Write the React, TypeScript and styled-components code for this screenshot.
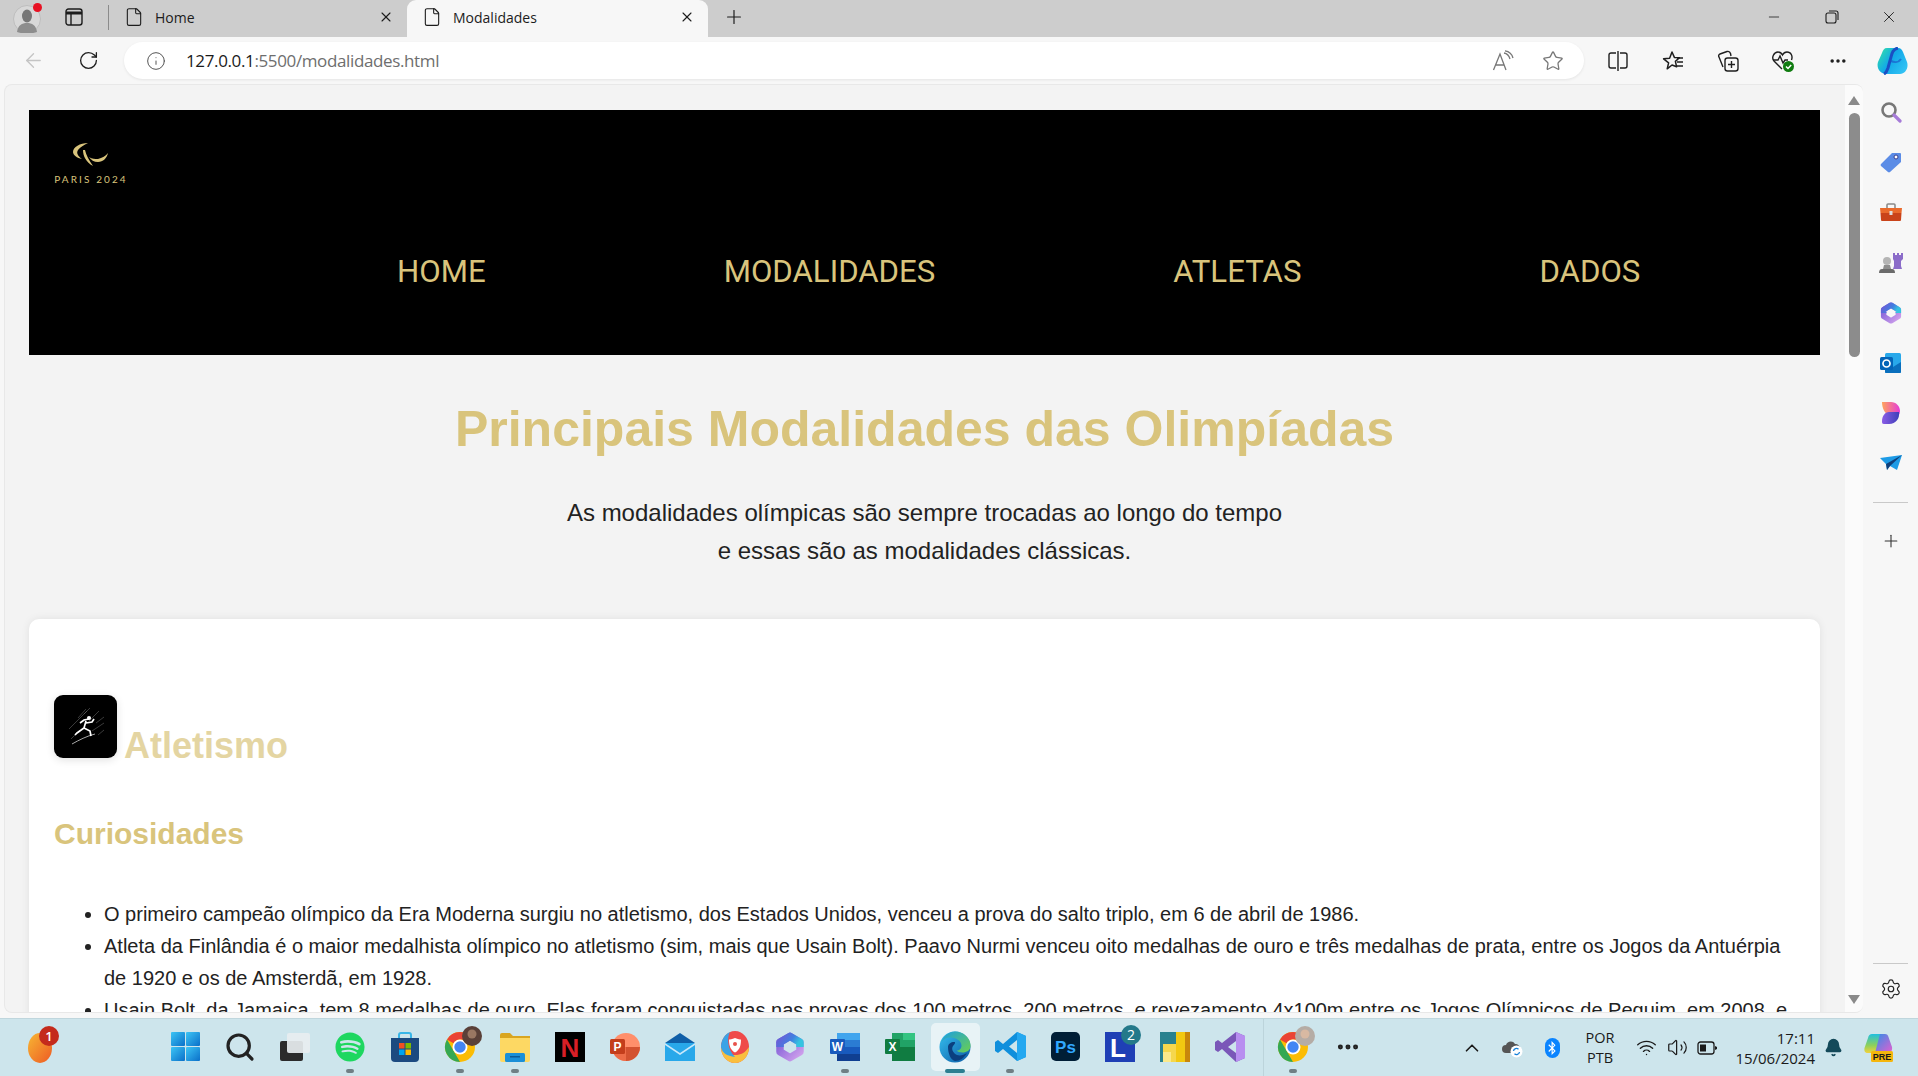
import * as React from 'react'
import styled, { createGlobalStyle } from 'styled-components'
import {
  ArrowLeft,
  RotateCw,
  Info,
  Star,
  MoreHorizontal,
  Plus,
  X,
  Minus,
  Settings,
  ChevronUp,
  Wifi,
  Volume2,
  Bell,
  File,
  Search,
} from 'lucide-react'
import { FaSpotify, FaBluetoothB } from 'react-icons/fa'

const GOLD = '#d9c47c'

const GlobalStyle = createGlobalStyle`
  html, body {
    margin: 0;
    padding: 0;
    overflow: hidden;
    background: #f7f7f7;
  }
  * {
    box-sizing: border-box;
  }
`

/* browser chrome */

const Screen = styled.div`
  width: 1918px;
  height: 1076px;
  display: flex;
  flex-direction: column;
  overflow: hidden;
  font-family: 'Liberation Sans', Arial, sans-serif;
`

const TabStrip = styled.div`
  height: 37px;
  flex: none;
  display: flex;
  align-items: center;
  background: #cdcdcd;
  color: #1c1c1c;
  font-family: 'Open Sans', 'Noto Sans', sans-serif;
`

const ProfileSlot = styled.div`
  position: relative;
  width: 54px;
  height: 37px;
  display: flex;
  align-items: center;
  justify-content: center;
`

const RedDot = styled.span`
  position: absolute;
  left: 33px;
  top: 3px;
  width: 9px;
  height: 9px;
  border-radius: 50%;
  background: #e81123;
`

const StripButton = styled.div`
  width: 40px;
  height: 37px;
  padding-bottom: 3px;
  display: flex;
  align-items: center;
  justify-content: center;
`

const StripDivider = styled.div`
  width: 1px;
  height: 25px;
  margin: 0 0 3px 14px;
  background: #8b8b8b;
`

const Tab = styled.div<{ $active?: boolean; $width: number }>`
  width: ${(p) => p.$width}px;
  height: 37px;
  padding: 0 13px 3px 15px;
  display: flex;
  align-items: center;
  gap: 11px;
  font-size: 14px;
  border-radius: 9px 9px 0 0;
  background: ${(p) => (p.$active ? '#f7f7f7' : 'transparent')};
`

const TabTitle = styled.span`
  flex: 1;
`

const NewTab = styled.div`
  width: 52px;
  height: 37px;
  padding-bottom: 3px;
  display: flex;
  align-items: center;
  justify-content: center;
`

const WindowControls = styled.div`
  margin-left: auto;
  display: flex;
  align-items: center;
`

const WindowButton = styled.div`
  width: 57.5px;
  height: 37px;
  padding-bottom: 3px;
  display: flex;
  align-items: center;
  justify-content: center;
`

const Toolbar = styled.div`
  height: 47px;
  flex: none;
  display: flex;
  align-items: center;
  padding-left: 6px;
  background: #f7f7f7;
`

const ToolButton = styled.div<{ $dim?: boolean }>`
  width: 55px;
  height: 40px;
  flex: none;
  display: flex;
  align-items: center;
  justify-content: center;
  color: ${(p) => (p.$dim ? '#c4c4c4' : '#1f1f1f')};
`

const AddressBar = styled.div`
  width: 1460px;
  height: 37px;
  flex: none;
  margin: 0 6px 0 8px;
  display: flex;
  align-items: center;
  padding: 0 20px 0 22px;
  border-radius: 19px;
  background: #fff;
  box-shadow: 0 1px 3px rgba(0, 0, 0, 0.08);
  font-family: 'Open Sans', 'Noto Sans', sans-serif;
  font-size: 17px;
  letter-spacing: -0.37px;
  color: #6e6e6e;
`

const AddressIcon = styled.div`
  flex: none;
  width: 20px;
  margin-right: 20px;
  display: flex;
  color: #555;
`

const Host = styled.span`
  color: #1a1a1a;
`

const AddressActions = styled.div`
  margin-left: auto;
  display: flex;
  align-items: center;
  gap: 28px;
  color: #777;
`

/* page area */

const Workspace = styled.div`
  flex: 1;
  min-height: 0;
  display: flex;
  background: #f7f7f7;
`

const Viewport = styled.div`
  flex: 1;
  min-width: 0;
  margin: 0 0 5px 4px;
  display: flex;
  overflow: hidden;
  border: 1px solid #e8e8e8;
  border-right: 0;
  border-radius: 8px;
  background: #f3f3f3;
`

const PageScroll = styled.main`
  flex: 1;
  min-width: 0;
  overflow: hidden;
  padding: 25px 25px 0 24px;
`

const ScrollTrack = styled.div`
  width: 18px;
  flex: none;
  position: relative;
  display: flex;
  flex-direction: column;
  align-items: center;
  background: #fbfbfb;
`

const ArrowUp = styled.div`
  margin-top: 11px;
  width: 0;
  height: 0;
  border-left: 6px solid transparent;
  border-right: 6px solid transparent;
  border-bottom: 9px solid #8a8a8a;
`

const Thumb = styled.div`
  margin-top: 8px;
  width: 11px;
  height: 244px;
  border-radius: 6px;
  background: #8c8c8c;
`

const ArrowDown = styled.div`
  margin-top: auto;
  margin-bottom: 8px;
  width: 0;
  height: 0;
  border-left: 6px solid transparent;
  border-right: 6px solid transparent;
  border-top: 9px solid #8a8a8a;
`

const SiteHeader = styled.header`
  height: 245px;
  padding: 32px 0 0 25px;
  background: #000;
`

const LogoBlock = styled.div`
  width: 74px;
  display: flex;
  flex-direction: column;
  align-items: center;
  gap: 7px;
`

const LogoText = styled.span`
  font-family: Lato, sans-serif;
  font-size: 10px;
  line-height: 11px;
  letter-spacing: 2.1px;
  white-space: nowrap;
  color: ${GOLD};
`

const SiteNav = styled.nav`
  margin: 69px 0 0 343px;
  display: flex;
  gap: 238px;
`

const NavLink = styled.a`
  font-family: Roboto, sans-serif;
  font-size: 31.2px;
  line-height: 36px;
  color: ${GOLD};
  text-decoration: none;
`

const PageTitle = styled.h1`
  margin: 45px 0 0;
  font-size: 50px;
  line-height: 59px;
  font-weight: 700;
  text-align: center;
  color: ${GOLD};
`

const Lead = styled.p`
  margin: 35px 0 0;
  font-size: 24px;
  line-height: 38px;
  text-align: center;
  color: #222;
`

const SportCard = styled.section`
  margin-top: 49px;
  height: 620px;
  padding: 76px 25px 0;
  border-radius: 10px;
  background: #fff;
  box-shadow: 0 0 8px rgba(0, 0, 0, 0.08);
`

const SportHeading = styled.h2`
  margin: 0;
  font-size: 36px;
  line-height: 36px;
  font-weight: 700;
  color: ${GOLD};
`

const SportIcon = styled.div`
  display: inline-block;
  width: 63px;
  height: 63px;
  margin-right: 7px;
  border-radius: 9px;
  overflow: hidden;
  background: #000;
  box-shadow: 0 2px 8px rgba(0, 0, 0, 0.12);
`

const SportName = styled.span`
  opacity: 0.7;
`

const SubHeading = styled.h3`
  margin: 52px 0 0;
  font-size: 30px;
  line-height: 36px;
  font-weight: 700;
  color: ${GOLD};
`

const FactList = styled.ul`
  margin: 46px 0 0;
  padding: 0 0 0 50px;
  font-size: 20px;
  line-height: 32px;
  color: #222;
`

const SideBar = styled.aside`
  width: 55px;
  flex: none;
  padding: 3px 0 4px;
  display: flex;
  flex-direction: column;
  align-items: center;
  background: #f7f7f7;
`

const SideSlot = styled.div`
  width: 100%;
  height: 50.2px;
  flex: none;
  display: flex;
  align-items: center;
  justify-content: center;
`

const SideRule = styled.div<{ $auto?: boolean }>`
  width: 35px;
  height: 1px;
  flex: none;
  margin-top: ${(p) => (p.$auto ? 'auto' : '13px')};
  margin-bottom: ${(p) => (p.$auto ? '0' : '13px')};
  background: #c9c9c9;
`

/* windows taskbar */

const Taskbar = styled.footer`
  height: 58px;
  flex: none;
  display: flex;
  align-items: center;
  background: #cde5ec;
  border-top: 1px solid #bfd6dd;
  color: #1a1a1a;
  font-family: 'Open Sans', 'Noto Sans', sans-serif;
`

const WeatherSlot = styled.div`
  position: relative;
  width: 157.5px;
  height: 100%;
  flex: none;
  padding-left: 27px;
  display: flex;
  align-items: center;
`

const CountBadge = styled.span`
  position: absolute;
  left: 39px;
  top: 7px;
  width: 20px;
  height: 20px;
  border-radius: 50%;
  background: #c42b1c;
  color: #fff;
  font-size: 13px;
  font-weight: 600;
  line-height: 20px;
  text-align: center;
`

const TaskCell = styled.div<{ $active?: boolean; $divider?: boolean }>`
  position: relative;
  width: 55px;
  height: 100%;
  flex: none;
  padding-bottom: 2px;
  display: flex;
  align-items: center;
  justify-content: center;
  ${(p) => p.$divider && 'margin-left: 8px;'}
  &::before {
    content: '';
    position: absolute;
    inset: 4px 3px 5px;
    border-radius: 5px;
    background: ${(p) => (p.$active ? 'rgba(255, 255, 255, 0.55)' : 'transparent')};
  }
  ${(p) =>
    p.$divider &&
    `&::after {
      content: '';
      position: absolute;
      left: -3px;
      top: 0;
      bottom: 0;
      width: 1px;
      background: #bcd4db;
    }`}
  > * {
    position: relative;
  }
`

const RunDot = styled.span<{ $active?: boolean }>`
  position: absolute !important;
  left: 50%;
  bottom: 3px;
  width: ${(p) => (p.$active ? 20 : 8)}px;
  height: 4px;
  margin-left: ${(p) => (p.$active ? -10 : -4)}px;
  border-radius: 2px;
  background: ${(p) => (p.$active ? '#2b7f91' : '#6f7f85')};
`

const Tray = styled.div`
  margin-left: auto;
  padding-right: 11px;
  height: 100%;
  display: flex;
  align-items: center;
`

const TrayItem = styled.div<{ $w: number }>`
  width: ${(p) => p.$w}px;
  flex: none;
  display: flex;
  align-items: center;
  justify-content: center;
`

const BluetoothPill = styled.div`
  width: 15px;
  height: 20px;
  border-radius: 8px;
  display: flex;
  align-items: center;
  justify-content: center;
  background: #0a84ff;
  color: #fff;
`

const LangText = styled.div`
  font-size: 14.5px;
  line-height: 20px;
  text-align: center;
`

const Clock = styled.div`
  width: 91px;
  flex: none;
  font-size: 15px;
  line-height: 20px;
  text-align: right;
  white-space: nowrap;
`

/* drawings */

function ProfileIcon() {
  return (
    <svg width="28" height="28" viewBox="0 0 28 28">
      <circle cx="14" cy="14" r="13.5" fill="#d8d8d8" stroke="#bdbdbd" />
      <ellipse cx="14" cy="11" rx="5" ry="6.5" fill="#777" />
      <path d="M4 27c1-7 5-9 10-9s9 2 10 9c-5 2-15 2-20 0z" fill="#8d8d8d" />
    </svg>
  )
}

function VerticalTabsIcon() {
  return (
    <svg width="18" height="18" viewBox="0 0 18 18" fill="none" stroke="#1c1c1c" strokeWidth="1.4">
      <rect x="1" y="1" width="16" height="16" rx="2.5" />
      <path d="M1 5h16" strokeWidth="3" />
      <path d="M6 5v12" />
    </svg>
  )
}

function ReadAloudIcon() {
  return (
    <svg width="22" height="22" viewBox="0 0 22 22" fill="none" stroke="#777" strokeWidth="1.3">
      <path d="M1.5 20L8 4l6 16M4 15h8" />
      <path d="M12 3c3 .5 5 2.5 6 6M13 .8c4 .6 7 3.2 8 7.2" />
    </svg>
  )
}

function SplitIcon() {
  return (
    <svg width="20" height="22" viewBox="0 0 20 22" fill="none" stroke="#1f1f1f" strokeWidth="1.4">
      <path d="M8 3H3a2 2 0 0 0-2 2v11a2 2 0 0 0 2 2h5M12 3h5a2 2 0 0 1 2 2v11a2 2 0 0 1-2 2h-5M10 1v20" />
    </svg>
  )
}

function FavoritesIcon() {
  return (
    <svg width="22" height="22" viewBox="0 0 22 22" fill="none" stroke="#1f1f1f" strokeWidth="1.5">
      <path d="M10 2l2.4 5.4 5 .4-4 3.6 1.2 5.4L10 15l-4.8 3.8 1.4-6-5-4 6-.6z" strokeLinejoin="round" />
      <path d="M15 8h6M15 12h6M15 16h6" />
    </svg>
  )
}

function CollectionsIcon() {
  return (
    <svg width="22" height="22" viewBox="0 0 22 22" fill="none" stroke="#1f1f1f" strokeWidth="1.4">
      <path d="M6 17L2 7a2 2 0 0 1 1-3l7-2.5c1.5-.4 3 .3 3.5 2L14 6" />
      <rect x="8" y="8" width="13" height="13" rx="2.5" />
      <path d="M14.5 11v7M11 14.5h7" />
    </svg>
  )
}

function HealthIcon() {
  return (
    <svg width="24" height="24" viewBox="0 0 24 24" fill="none">
      <path
        d="M11 20L3 12C0 8.5 3 3 7 3c2 0 3.5 1 4.5 3C12.5 4 14 3 16 3c4 0 6 4 4.5 8"
        stroke="#1f1f1f"
        strokeWidth="1.4"
      />
      <path d="M2 11h5l2-4 3 7 2-3h3" stroke="#1f1f1f" strokeWidth="1.4" />
      <circle cx="17.5" cy="17.5" r="5.5" fill="#107c10" />
      <path d="M15 17.5l2 2 3.2-3.6" stroke="#fff" strokeWidth="1.5" />
    </svg>
  )
}

function CopilotIcon() {
  return (
    <svg width="31" height="28" viewBox="0 0 31 28">
      <defs>
        <linearGradient id="copA" x1="0" y1="0.2" x2="1" y2="0.8">
          <stop offset="0" stopColor="#2fdcae" />
          <stop offset="0.45" stopColor="#12a8e8" />
          <stop offset="1" stopColor="#35c4f5" />
        </linearGradient>
      </defs>
      <path
        d="M10 1H21C24 1 25 3 26 5L30 15C32 21 28 27 23 27H9C4 27-1 22 1 15L5 6C6 3 7 1 10 1z"
        fill="url(#copA)"
      />
      <path d="M21 1C16 2 15 6 14 10L11 21C10 24 9 26 7 27" fill="none" stroke="#1a4fc4" strokeWidth="3" />
      <path d="M14 14C18 16 22 15 24 12" fill="none" stroke="#1a4fc4" strokeWidth="2" opacity="0.6" />
    </svg>
  )
}

function SideSearch() {
  return (
    <svg width="22" height="22" viewBox="0 0 22 22" fill="none">
      <circle cx="9" cy="9" r="6.5" stroke="#777" strokeWidth="2.6" />
      <path d="M14 14l6 6" stroke="#a67bd8" strokeWidth="3.2" strokeLinecap="round" />
    </svg>
  )
}

function SideTag() {
  return (
    <svg width="22" height="22" viewBox="0 0 22 22">
      <path d="M1 13L12 2h8a1 1 0 0 1 1 1v8L10 21a1.5 1.5 0 0 1-2 0L1 15a1.5 1.5 0 0 1 0-2z" fill="#5b8ce6" />
      <circle cx="16" cy="6" r="2" fill="#fff" stroke="#3b3f8f" />
    </svg>
  )
}

function SideToolbox() {
  return (
    <svg width="24" height="20" viewBox="0 0 24 20">
      <path d="M8 6V3a1 1 0 0 1 1-1h6a1 1 0 0 1 1 1v3" fill="none" stroke="#8b8b8b" strokeWidth="1.6" />
      <path d="M1 6h22l-.5 5H1.500z" fill="#ea6a2c" />
      <path d="M1.500 11h21l-.5 7a1 1 0 0 1-1 1H3a1 1 0 0 1-1-1z" fill="#c9431a" />
      <rect x="10.5" y="9" width="3" height="4" fill="#ddd" />
    </svg>
  )
}

function SideChess() {
  return (
    <svg width="24" height="22" viewBox="0 0 24 22">
      <circle cx="8" cy="9" r="4" fill="#b5b5b5" />
      <path d="M5 13h6l1 4H4z" fill="#8e8e8e" />
      <path d="M0 21c0-2.5 1-4 3-4h10c2 0 3 1.5 3 4z" fill="#6b6b6b" />
      <path d="M14 1h2v2h2V1h2v2h2V1h2v6l-2 2v5l1 3H14l1-3V9l-1-2z" fill="#8b6cc9" />
    </svg>
  )
}

function M365Icon({ size = 22 }: { size?: number }) {
  return (
    <svg width={size} height={size} viewBox="0 0 24 24" fill="none">
      <defs>
        <linearGradient id="m3a" x1="0" y1="0" x2="1" y2="0.4">
          <stop offset="0" stopColor="#6a5fd8" />
          <stop offset="0.6" stopColor="#3f7fe0" />
          <stop offset="1" stopColor="#35c3e0" />
        </linearGradient>
        <linearGradient id="m3b" x1="0" y1="0" x2="1" y2="1">
          <stop offset="0" stopColor="#7a5ad6" />
          <stop offset="1" stopColor="#cfa0ec" />
        </linearGradient>
      </defs>
      <path d="M12 3.500l8 4.700v7.600l-8 4.700-8-4.700V8.200z" stroke="url(#m3b)" strokeWidth="6" strokeLinejoin="round" />
      <path d="M4 12V8.200l8-4.700 8 4.700V12" stroke="url(#m3a)" strokeWidth="6" strokeLinejoin="round" />
    </svg>
  )
}

function OutlookIcon() {
  return (
    <svg width="22" height="22" viewBox="0 0 22 22">
      <rect x="5" y="1" width="16" height="20" rx="1.5" fill="#28a8ea" />
      <path d="M5 10l8 5 8-5v10a1 1 0 0 1-1 1H6a1 1 0 0 1-1-1z" fill="#0a6fbd" />
      <rect x="0" y="5" width="13" height="13" rx="1.5" fill="#0364b8" />
      <circle cx="6.5" cy="11.5" r="3.5" fill="none" stroke="#fff" strokeWidth="1.7" />
    </svg>
  )
}

function DesignerIcon() {
  return (
    <svg width="20" height="22" viewBox="0 0 20 22">
      <defs>
        <linearGradient id="dsa" x1="0" y1="0" x2="1" y2="0">
          <stop offset="0" stopColor="#ffa45c" />
          <stop offset="1" stopColor="#e53bd8" />
        </linearGradient>
        <linearGradient id="dsb" x1="0" y1="0" x2="1" y2="0">
          <stop offset="0" stopColor="#8a5ce6" />
          <stop offset="1" stopColor="#3f3fb8" />
        </linearGradient>
      </defs>
      <path d="M1 0h9c5 0 9 4 9 9 0 1-.3 2-.6 3H7C4 12 1 6 1 0z" fill="url(#dsa)" />
      <path d="M8 10h10c1 6-3 12-10 12H3c-2 0-2-1-2-3 0-5 3-9 7-9z" fill="url(#dsb)" />
    </svg>
  )
}

function PlaneIcon() {
  return (
    <svg width="22" height="16" viewBox="0 0 22 16">
      <path d="M0 3l22-3-5 15-7-4-3 4-1-6z" fill="#1d9be6" />
      <path d="M6 9L22 0 10 11l-3 4z" fill="#0f3f7a" />
    </svg>
  )
}

function LogoMark() {
  return (
    <svg width="36" height="25" viewBox="0 0 36 25" fill={GOLD}>
      <path d="M15 1C7 1 0 5 0 10c0 3 4 6 9 7-4-3-6-6-4-9 2-3 6-5 10-7z" />
      <path d="M10 8c0 6 3 12 10 16-4-6-7-11-8-16z" />
      <path d="M35 11c-1 5-5 9-10 9-4 0-7-2-9-5 3 2 6 2 9 2 4-1 8-3 10-6z" />
    </svg>
  )
}

function RunnerArt() {
  return (
    <svg width="63" height="63" viewBox="0 0 63 63" fill="none">
      <g stroke="#777" strokeWidth="0.5">
        <path d="M15 34l18-18M24 23l8-9M35 26l10-10M42 28l8-6M17 44l6-6M38 36l12-8M44 40l6-5M30 19l6-6" />
      </g>
      <path d="M18 49c7-4 15-8 23-10" stroke="#bbb" strokeWidth="0.9" />
      <g transform="translate(-1 2)" stroke="#fff" strokeWidth="1.7">
        <path d="M36 22l-5 1-4 3M33 24l-2 7-7 5-2 2M31 31l6 3 1 5M33 26l6-1 2-3" />
        <circle cx="36" cy="21" r="1.2" fill="#fff" />
      </g>
    </svg>
  )
}

function WindowsIcon() {
  return (
    <svg width="29" height="29" viewBox="0 0 29 29">
      <defs>
        <linearGradient id="win" x1="0" y1="0" x2="1" y2="1">
          <stop offset="0" stopColor="#3cc5f5" />
          <stop offset="1" stopColor="#0a6fc9" />
        </linearGradient>
      </defs>
      <rect width="14" height="14" rx="1" fill="url(#win)" />
      <rect x="15" width="14" height="14" rx="1" fill="url(#win)" />
      <rect y="15" width="14" height="14" rx="1" fill="url(#win)" />
      <rect x="15" y="15" width="14" height="14" rx="1" fill="url(#win)" />
    </svg>
  )
}

function TaskViewIcon() {
  return (
    <svg width="30" height="28" viewBox="0 0 30 28">
      <rect x="0" y="8" width="23" height="20" rx="2" fill="#2b2b2b" />
      <rect x="7" y="0" width="23" height="20" rx="2" fill="#e8eef0" opacity="0.92" />
    </svg>
  )
}

function StoreIcon() {
  return (
    <svg width="30" height="30" viewBox="0 0 30 30">
      <path d="M9 6V3a2 2 0 0 1 2-2h8a2 2 0 0 1 2 2v3" fill="none" stroke="#38b6e8" strokeWidth="2" />
      <path d="M1 6h28v20a4 4 0 0 1-4 4H5a4 4 0 0 1-4-4z" fill="#1c4a80" />
      <rect x="9" y="11" width="5.5" height="5.5" fill="#f25022" />
      <rect x="15.5" y="11" width="5.5" height="5.5" fill="#7fba00" />
      <rect x="9" y="17.5" width="5.5" height="5.5" fill="#00a4ef" />
      <rect x="15.5" y="17.5" width="5.5" height="5.5" fill="#ffb900" />
    </svg>
  )
}

function ChromeIcon({ avatar, face }: { avatar: string; face: string }) {
  return (
    <svg width="30" height="30" viewBox="0 0 30 30" overflow="visible">
      <circle cx="15" cy="15" r="15" fill="#fbbc04" />
      <path d="M2 7.500A15 15 0 0 1 28 7.500H15a7.500 7.500 0 0 0-6.500 3.750z" fill="#ea4335" />
      <path d="M2 7.500l6.500 11.250L15 30A15 15 0 0 1 2 7.500z" fill="#34a853" />
      <circle cx="15" cy="15" r="7.500" fill="#fff" />
      <circle cx="15" cy="15" r="5.700" fill="#4285f4" />
      <circle cx="27" cy="4" r="10" fill={avatar} />
      <circle cx="27" cy="2" r="4.500" fill={face} />
    </svg>
  )
}

function FolderIcon() {
  return (
    <svg width="30" height="30" viewBox="0 0 30 30">
      <path d="M0 3a2 2 0 0 1 2-2h8l3 3h17v6H0z" fill="#d9a520" />
      <path d="M0 6h30v22a2 2 0 0 1-2 2H2a2 2 0 0 1-2-2z" fill="#fdd863" />
      <rect x="5" y="21" width="20" height="9" rx="1.5" fill="#1a8fd8" />
      <rect x="10" y="24" width="10" height="1.5" fill="#0c5b98" />
    </svg>
  )
}

function NetflixIcon() {
  return (
    <svg width="30" height="30" viewBox="0 0 30 30">
      <rect width="30" height="30" fill="#000" />
      <text x="15" y="25" textAnchor="middle" fontFamily="Liberation Sans" fontWeight="700" fontSize="26" fill="#d81f26">
        N
      </text>
    </svg>
  )
}

function PowerPointIcon() {
  return (
    <svg width="30" height="30" viewBox="0 0 30 30">
      <circle cx="16" cy="15" r="14" fill="#ff8f6b" />
      <path d="M16 15h14a14 14 0 0 1-14 14z" fill="#d35230" />
      <path d="M16 15v14A14 14 0 0 1 2 15z" fill="#ed6c47" />
      <rect x="0" y="7" width="15" height="15" rx="1.5" fill="#c43e1c" />
      <text x="7.5" y="19" textAnchor="middle" fontFamily="Liberation Sans" fontWeight="700" fontSize="12" fill="#fff">
        P
      </text>
    </svg>
  )
}

function MailIcon() {
  return (
    <svg width="30" height="30" viewBox="0 0 30 30">
      <path d="M0 11L15 1l15 10v3H0z" fill="#0f5fa8" />
      <rect x="0" y="11" width="30" height="18" fill="#28a8ea" />
      <path d="M0 11l15 10 15-10v2L15 23 0 13z" fill="#c8e8fa" />
    </svg>
  )
}

function ShieldBrowserIcon() {
  return (
    <svg width="28" height="32" viewBox="0 0 28 32">
      <ellipse cx="14" cy="16" rx="14" ry="16" fill="#ef4a4a" />
      <path d="M0 16c0 9 6 16 14 16s14-7 14-16c-4 6-8 8-14 8S3 22 0 16z" fill="#f9bf3f" />
      <path d="M0 16C0 9 4 3 9 1 6 6 6 18 14 26 6 25 1 22 0 16z" fill="#3aa3e6" />
      <path d="M14 7c3 1 5 1.5 6 1.5 0 7-2 11-6 13-4-2-6-6-6-13 1 0 3-.5 6-1.5z" fill="#fff" />
      <circle cx="14" cy="13" r="2" fill="#e8534b" />
    </svg>
  )
}

function WordIcon() {
  return (
    <svg width="30" height="30" viewBox="0 0 30 30">
      <rect x="7" y="1" width="23" height="7" fill="#41a5ee" />
      <rect x="7" y="8" width="23" height="7" fill="#2b7cd3" />
      <rect x="7" y="15" width="23" height="7" fill="#185abd" />
      <rect x="7" y="22" width="23" height="7" fill="#103f91" />
      <rect x="0" y="7" width="15" height="15" rx="1" fill="#185abd" />
      <text x="7.5" y="19" textAnchor="middle" fontFamily="Liberation Sans" fontWeight="700" fontSize="12" fill="#fff">
        W
      </text>
    </svg>
  )
}

function ExcelIcon() {
  return (
    <svg width="30" height="30" viewBox="0 0 30 30">
      <rect x="7" y="1" width="12" height="14" fill="#21a366" />
      <rect x="18" y="1" width="12" height="7" fill="#33c481" />
      <rect x="18" y="8" width="12" height="7" fill="#21a366" />
      <rect x="7" y="15" width="23" height="14" fill="#107c41" />
      <rect x="0" y="7" width="15" height="15" rx="1" fill="#107c41" />
      <text x="7.5" y="19" textAnchor="middle" fontFamily="Liberation Sans" fontWeight="700" fontSize="12" fill="#fff">
        X
      </text>
    </svg>
  )
}

function EdgeIcon() {
  return (
    <svg width="32" height="32" viewBox="0 0 32 32">
      <defs>
        <linearGradient id="edg" x1="0" y1="0" x2="1" y2="1">
          <stop offset="0" stopColor="#35c1f1" />
          <stop offset="1" stopColor="#0c59a4" />
        </linearGradient>
        <linearGradient id="edh" x1="0" y1="0" x2="1" y2="1">
          <stop offset="0" stopColor="#1b9de2" />
          <stop offset="1" stopColor="#6ad04f" />
        </linearGradient>
      </defs>
      <circle cx="16" cy="16" r="15.5" fill="url(#edg)" />
      <path d="M2 12C5 3 12 .5 16 .5c9 0 15.5 7 15.5 14 0 5-4 7-8 7-3 0-5-1-6-2 3 0 5-2 5-5 0-5-6-8-11-8-4 0-8 2-9.5 5.5z" fill="url(#edh)" />
      <path d="M9 16c0-3 3-5 6-5 2 0 1 2-1 4-2 3 0 7 4 9 3 1 7 0 10-2-3 5-7 8-12 8-5-1-7-9-7-14z" fill="#0b3f7f" />
    </svg>
  )
}

function VSCodeIcon() {
  return (
    <svg width="31" height="31" viewBox="0 0 31 31">
      <path d="M22 1l9 4v21l-9 4-14-12-5 4-3-2V11l3-2 5 4zM22 9l-8 6.5 8 6.5z" fill="#0f8fdc" />
      <path d="M22 1l9 4v21l-9 4z" fill="#24a8f0" />
    </svg>
  )
}

function PhotoshopIcon() {
  return (
    <svg width="29" height="29" viewBox="0 0 29 29">
      <rect width="29" height="29" rx="5" fill="#001e36" />
      <text x="14.5" y="21" textAnchor="middle" fontFamily="Liberation Sans" fontWeight="700" fontSize="17" fill="#31a8ff">
        Ps
      </text>
    </svg>
  )
}

function LetterIcon() {
  return (
    <svg width="30" height="30" viewBox="0 0 30 30" overflow="visible">
      <rect width="30" height="30" fill="#1f3fb5" />
      <text x="13" y="25" textAnchor="middle" fontFamily="Liberation Sans" fontWeight="700" fontSize="26" fill="#fff">
        L
      </text>
      <circle cx="26" cy="3" r="10" fill="#24798a" />
      <text x="26" y="8" textAnchor="middle" fontFamily="Open Sans" fontSize="14" fill="#fff">
        2
      </text>
    </svg>
  )
}

function PowerBIIcon() {
  return (
    <svg width="30" height="30" viewBox="0 0 30 30">
      <rect width="30" height="30" fill="#28818f" />
      <rect x="16" y="0" width="10" height="30" fill="#f2c811" />
      <rect x="25" y="0" width="5" height="30" fill="#c8860c" />
      <rect x="3" y="12" width="13" height="18" fill="#f5d74d" />
      <rect x="3" y="20" width="8" height="10" fill="#fbe98a" />
    </svg>
  )
}

function VisualStudioIcon() {
  return (
    <svg width="30" height="30" viewBox="0 0 30 30">
      <path d="M21 0l9 4v22l-9 4-14-13-4 3-3-2V10l3-2 4 3 14-11zM21 9l-8 6 8 6z" fill="#7a57b8" />
      <path d="M21 0l9 4v22l-9 4z" fill="#b88ef0" />
    </svg>
  )
}

function CloudSync() {
  return (
    <svg width="22" height="20" viewBox="0 0 22 20">
      <path d="M5 15a4 4 0 0 1 0-8c1-4 7-5 9-1 3 0 5 2 5 5v4z" fill="#555" />
      <circle cx="15.5" cy="13.5" r="6" fill="#fff" />
      <path d="M12.5 13a3 3 0 0 1 5-1.8M18.5 14a3 3 0 0 1-5 1.8" fill="none" stroke="#1580d8" strokeWidth="1.3" />
    </svg>
  )
}

function BatteryGlyph() {
  return (
    <svg width="21" height="14" viewBox="0 0 21 14" fill="none">
      <rect x="1" y="1" width="16" height="12" rx="2.5" stroke="#1a1a1a" strokeWidth="1.3" />
      <rect x="3" y="3.5" width="6" height="7" fill="#1a1a1a" />
      <path d="M18 5l2 1v2l-2 1z" fill="#1a1a1a" />
    </svg>
  )
}

function CopilotPreIcon() {
  return (
    <svg width="30" height="30" viewBox="0 0 30 30">
      <defs>
        <linearGradient id="cpl" x1="0" y1="0" x2="0" y2="1">
          <stop offset="0" stopColor="#1fc0e0" />
          <stop offset="0.6" stopColor="#8fd05a" />
          <stop offset="1" stopColor="#f2d23c" />
        </linearGradient>
        <linearGradient id="cpr" x1="0" y1="0" x2="1" y2="1">
          <stop offset="0" stopColor="#2a8fe8" />
          <stop offset="1" stopColor="#e45fd0" />
        </linearGradient>
      </defs>
      <path d="M13 1h8c2 0 3 1 3.5 3L28 14c.6 3-1 6-4 6H10z" fill="url(#cpr)" />
      <path d="M8 1h8l-5 19H4c-3 0-4-2-3.500-5L4 5c.5-2.500 2-4 4-4z" fill="url(#cpl)" />
      <rect x="7" y="18" width="22" height="11" rx="1.5" fill="#f5b60d" />
      <text x="18" y="27" textAnchor="middle" fontFamily="Liberation Sans" fontWeight="700" fontSize="9" fill="#1a1a1a">
        PRE
      </text>
    </svg>
  )
}

interface TaskApp {
  icon: React.ReactNode
  running?: boolean
  active?: boolean
  divider?: boolean
}

const taskApps: TaskApp[] = [
  { icon: <WindowsIcon /> },
  { icon: <Search size={32} strokeWidth={2.4} color="#222" /> },
  { icon: <TaskViewIcon /> },
  { icon: <FaSpotify size={30} color="#1ed760" />, running: true },
  { icon: <StoreIcon /> },
  { icon: <ChromeIcon avatar="#5a4038" face="#9a7762" />, running: true },
  { icon: <FolderIcon />, running: true },
  { icon: <NetflixIcon /> },
  { icon: <PowerPointIcon /> },
  { icon: <MailIcon /> },
  { icon: <ShieldBrowserIcon /> },
  { icon: <M365Icon size={30} /> },
  { icon: <WordIcon />, running: true },
  { icon: <ExcelIcon /> },
  { icon: <EdgeIcon />, running: true, active: true },
  { icon: <VSCodeIcon />, running: true },
  { icon: <PhotoshopIcon /> },
  { icon: <LetterIcon /> },
  { icon: <PowerBIIcon /> },
  { icon: <VisualStudioIcon /> },
  { icon: <ChromeIcon avatar="#b5aca5" face="#d8b9a2" />, running: true, divider: true },
  { icon: <MoreHorizontal size={26} strokeWidth={2.6} color="#222" /> },
]

const navLinks = ['HOME', 'MODALIDADES', 'ATLETAS', 'DADOS']

const facts = [
  'O primeiro campeão olímpico da Era Moderna surgiu no atletismo, dos Estados Unidos, venceu a prova do salto triplo, em 6 de abril de 1986.',
  'Atleta da Finlândia é o maior medalhista olímpico no atletismo (sim, mais que Usain Bolt). Paavo Nurmi venceu oito medalhas de ouro e três medalhas de prata, entre os Jogos da Antuérpia de 1920 e os de Amsterdã, em 1928.',
  'Usain Bolt, da Jamaica, tem 8 medalhas de ouro. Elas foram conquistadas nas provas dos 100 metros, 200 metros, e revezamento 4x100m entre os Jogos Olímpicos de Pequim, em 2008, e Londres, em 2012, e do Rio, em 2016.',
]

export default function App() {
  return (
    <Screen>
      <GlobalStyle />
      <TabStrip>
        <ProfileSlot>
          <ProfileIcon />
          <RedDot />
        </ProfileSlot>
        <StripButton>
          <VerticalTabsIcon />
        </StripButton>
        <StripDivider />
        <Tab $width={298}>
          <File size={20} strokeWidth={1.3} />
          <TabTitle>Home</TabTitle>
          <X size={16} strokeWidth={1.6} />
        </Tab>
        <Tab $active $width={301}>
          <File size={20} strokeWidth={1.3} />
          <TabTitle>Modalidades</TabTitle>
          <X size={16} strokeWidth={1.6} />
        </Tab>
        <NewTab>
          <Plus size={22} strokeWidth={1.3} />
        </NewTab>
        <WindowControls>
          <WindowButton>
            <Minus size={16} strokeWidth={1.2} />
          </WindowButton>
          <WindowButton>
            <svg width="14" height="14" viewBox="0 0 14 14" fill="none" stroke="#1c1c1c" strokeWidth="1.1">
              <rect x="1" y="3" width="10" height="10" rx="2" />
              <path d="M4 1h7a2 2 0 0 1 2 2v7" />
            </svg>
          </WindowButton>
          <WindowButton>
            <X size={18} strokeWidth={1.2} />
          </WindowButton>
        </WindowControls>
      </TabStrip>

      <Toolbar>
        <ToolButton $dim>
          <ArrowLeft size={23} strokeWidth={1.4} />
        </ToolButton>
        <ToolButton>
          <RotateCw size={21} strokeWidth={1.5} />
        </ToolButton>
        <AddressBar>
          <AddressIcon>
            <Info size={20} strokeWidth={1.2} />
          </AddressIcon>
          <span>
            <Host>127.0.0.1</Host>:5500/modalidades.html
          </span>
          <AddressActions>
            <ReadAloudIcon />
            <Star size={22} strokeWidth={1.4} />
          </AddressActions>
        </AddressBar>
        <ToolButton>
          <SplitIcon />
        </ToolButton>
        <ToolButton>
          <FavoritesIcon />
        </ToolButton>
        <ToolButton>
          <CollectionsIcon />
        </ToolButton>
        <ToolButton>
          <HealthIcon />
        </ToolButton>
        <ToolButton>
          <MoreHorizontal size={20} strokeWidth={2.2} />
        </ToolButton>
        <ToolButton>
          <CopilotIcon />
        </ToolButton>
      </Toolbar>

      <Workspace>
        <Viewport>
          <PageScroll>
            <SiteHeader>
              <LogoBlock>
                <LogoMark />
                <LogoText>PARIS 2024</LogoText>
              </LogoBlock>
              <SiteNav>
                {navLinks.map((link) => (
                  <NavLink key={link}>{link}</NavLink>
                ))}
              </SiteNav>
            </SiteHeader>
            <PageTitle>Principais Modalidades das Olimpíadas</PageTitle>
            <Lead>
              As modalidades olímpicas são sempre trocadas ao longo do tempo
              <br />e essas são as modalidades clássicas.
            </Lead>
            <SportCard>
              <SportHeading>
                <SportIcon>
                  <RunnerArt />
                </SportIcon>
                <SportName>Atletismo</SportName>
              </SportHeading>
              <SubHeading>Curiosidades</SubHeading>
              <FactList>
                {facts.map((fact) => (
                  <li key={fact}>{fact}</li>
                ))}
              </FactList>
            </SportCard>
          </PageScroll>
          <ScrollTrack>
            <ArrowUp />
            <Thumb />
            <ArrowDown />
          </ScrollTrack>
        </Viewport>
        <SideBar>
          <SideSlot>
            <SideSearch />
          </SideSlot>
          <SideSlot>
            <SideTag />
          </SideSlot>
          <SideSlot>
            <SideToolbox />
          </SideSlot>
          <SideSlot>
            <SideChess />
          </SideSlot>
          <SideSlot>
            <M365Icon />
          </SideSlot>
          <SideSlot>
            <OutlookIcon />
          </SideSlot>
          <SideSlot>
            <DesignerIcon />
          </SideSlot>
          <SideSlot>
            <PlaneIcon />
          </SideSlot>
          <SideRule />
          <SideSlot>
            <Plus size={20} strokeWidth={1.3} color="#333" />
          </SideSlot>
          <SideRule $auto />
          <SideSlot>
            <Settings size={22} strokeWidth={1.3} color="#222" />
          </SideSlot>
        </SideBar>
      </Workspace>

      <Taskbar>
        <WeatherSlot>
          <svg width="26" height="30" viewBox="0 0 26 30">
            <defs>
              <linearGradient id="wth" x1="0" y1="0" x2="1" y2="1">
                <stop offset="0" stopColor="#f7b733" />
                <stop offset="1" stopColor="#ee5a24" />
              </linearGradient>
            </defs>
            <ellipse cx="13" cy="15" rx="12" ry="15" fill="url(#wth)" />
          </svg>
          <CountBadge>1</CountBadge>
        </WeatherSlot>
        {taskApps.map((app, index) => (
          <TaskCell key={index} $active={app.active} $divider={app.divider}>
            {app.icon}
            {app.running && <RunDot $active={app.active} />}
          </TaskCell>
        ))}
        <Tray>
          <TrayItem $w={40}>
            <ChevronUp size={22} strokeWidth={1.8} />
          </TrayItem>
          <TrayItem $w={40}>
            <CloudSync />
          </TrayItem>
          <TrayItem $w={40}>
            <BluetoothPill>
              <FaBluetoothB size={14} />
            </BluetoothPill>
          </TrayItem>
          <TrayItem $w={56}>
            <LangText>
              POR
              <br />
              PTB
            </LangText>
          </TrayItem>
          <TrayItem $w={36}>
            <Wifi size={21} strokeWidth={1.6} />
          </TrayItem>
          <TrayItem $w={26}>
            <Volume2 size={21} strokeWidth={1.4} />
          </TrayItem>
          <TrayItem $w={34}>
            <BatteryGlyph />
          </TrayItem>
          <Clock>
            17:11
            <br />
            15/06/2024
          </Clock>
          <TrayItem $w={36}>
            <Bell size={19} fill="#144a5a" color="#144a5a" />
          </TrayItem>
          <TrayItem $w={56}>
            <CopilotPreIcon />
          </TrayItem>
        </Tray>
      </Taskbar>
    </Screen>
  )
}
